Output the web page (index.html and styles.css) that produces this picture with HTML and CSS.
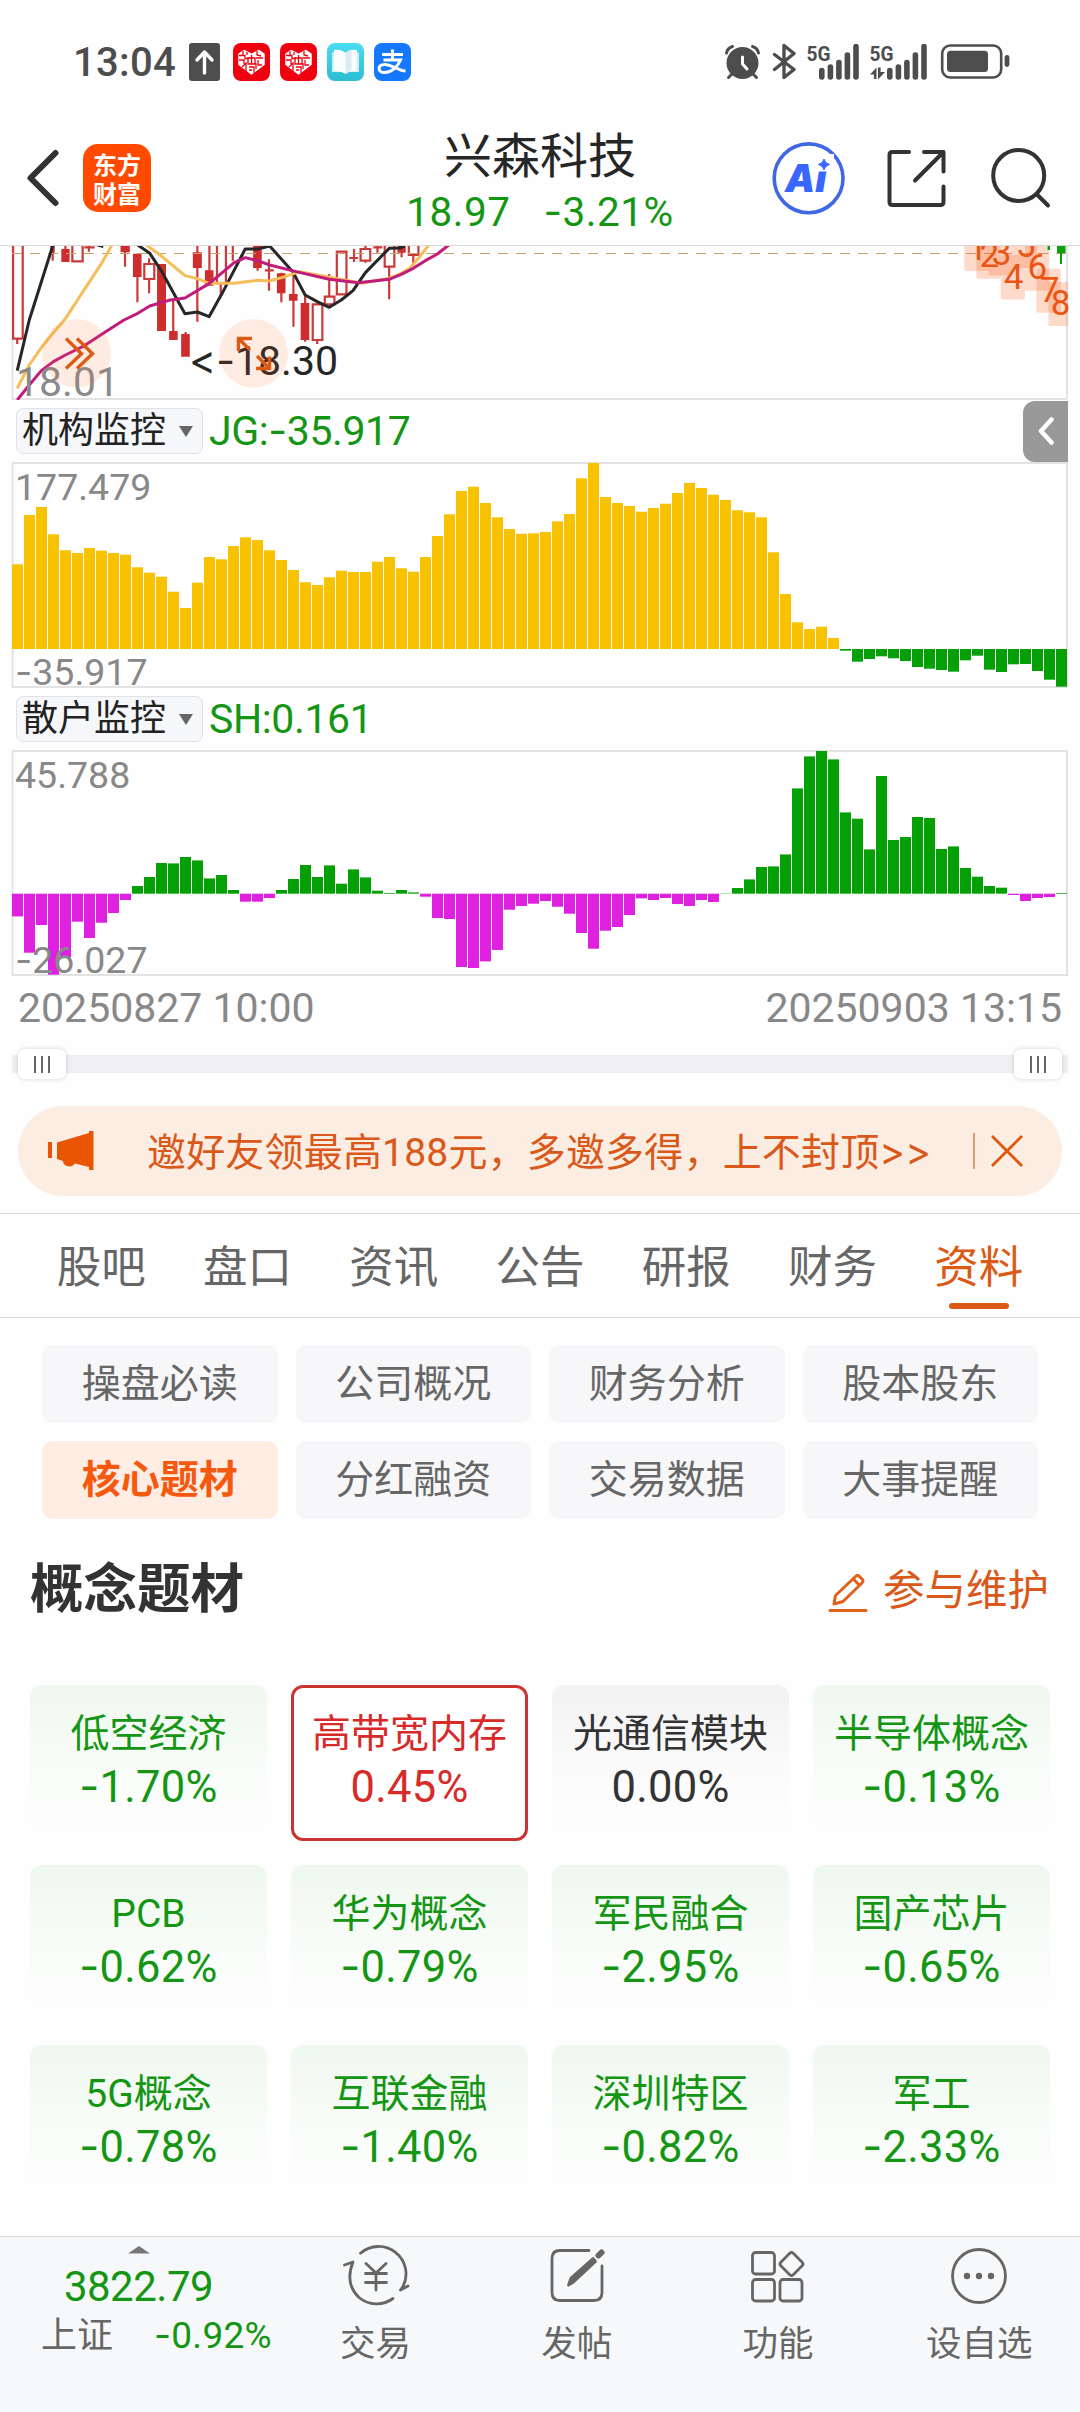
FILE: index.html
```html
<!DOCTYPE html>
<html lang="zh-CN">
<head>
<meta charset="utf-8">
<title>兴森科技</title>
<link rel="stylesheet" href="styles.css">
</head>
<body>
<div class="status">
  <span class="clock">13:04</span>
  <svg class="notices" width="222" height="38" viewBox="0 0 222 38">
    <rect width="31" height="38" rx="3" fill="#4d4d4d"/>
    <path d="M15.500 30V9M8 17l7.500-8 7.500 8" fill="none" stroke="#fff" stroke-width="3.400" stroke-linecap="round" stroke-linejoin="round"/>
    <g id="shop">
      <rect x="44" width="37" height="38" rx="8" fill="#f0000f"/>
      <path d="M62.500 31 50 21.500V11l5-3.500 7.500 4 7.500-4 5 3.500v10.500z" fill="#fff" stroke="#fff" stroke-width="1.500" stroke-linejoin="round"/>
      <path d="M50 12.500h6v3h4M54 8v4M50 17h5v4M58 9v3M53 24l4-4v9M59 14v7h7v-6h-7M60 24h5v6M62.500 12v9M68 8v4l4 1M67 15h7M69 17v5h4M67 20v6M60 27h3" fill="none" stroke="#f0000f" stroke-width="1.300"/>
    </g>
    <use href="#shop" x="47"/>
    <defs><linearGradient id="cyan" x2="0" y2="1"><stop stop-color="#4adcf0"/><stop offset="1" stop-color="#2cbdd2"/></linearGradient></defs>
    <rect x="138" width="37" height="38" rx="8" fill="url(#cyan)"/>
    <path d="M143 9.500h27V29h-27z" fill="#c9f1f7"/>
    <path d="M145 7q7-1 11.500 3Q161 6 168 7v21q-7-.5-11.500 3-4.500-3.500-11.500-3z" fill="#fafdff"/>
    <path d="M156.500 10q4-4 6-3.200v21q-4 .5-6 3.200z" fill="#dceaf5"/>
    <rect x="185" width="37" height="38" rx="8" fill="#1677ff"/>
    <path d="M193 11.500h21M203.500 6.500v11M194.500 17h17c-3 7-9 12.500-16 12.500-7 0-7.500-8 0-8 7 0 14 6 21 6.500" fill="none" stroke="#fff" stroke-width="3"/>
  </svg>
  <svg class="system" width="286" height="36" viewBox="724 44 286 36">
    <g fill="none" stroke="#4d4d4d" stroke-width="3" stroke-linecap="round">
      <circle cx="742.500" cy="63" r="14.500" fill="#4d4d4d"/>
      <path d="M726.500 53q1-5 6-6.500M758.500 53q-1-5-6-6.500M732 74l-3.500 3.500M753 74l3.500 3.500"/>
      <path d="M742.500 57v7l4.500 5" stroke="#fff"/>
      <path d="M774.500 54.500 794 69.500 784 77.500V45.500l10 8L774.500 69.500" stroke-linejoin="round" stroke-width="3.400"/>
      <path d="M821.800 70.500v6.500M830.400 67v10M838.900 62.500V77M847.400 55V77M856 46.500V77M889.800 70.500v6.500M898.400 67v10M906.900 62.500V77M915.400 55V77M924 46.500V77" stroke-width="5.600"/>
      <rect x="942.200" y="45.500" width="59" height="32" rx="8" stroke-width="2.600"/>
    </g>
    <path d="M870 74.500 876.500 67.500V79h-2.600v-4.500zM878 67.500h2.600v4.500h4.400L878 79.500z" fill="#4d4d4d"/>
    <rect x="947" y="50.700" width="41" height="21.200" rx="3.500" fill="#4d4d4d"/>
    <rect x="1004.600" y="55" width="4.800" height="12" rx="2.400" fill="#4d4d4d"/>
    <text class="net" x="806.500" y="61" textLength="24" lengthAdjust="spacingAndGlyphs">5G</text>
    <text class="net" x="869.500" y="61" textLength="24" lengthAdjust="spacingAndGlyphs">5G</text>
  </svg>
</div>

<header class="head">
  <svg class="back" width="36" height="60" viewBox="0 0 36 60"><path d="M30.500 5 5.500 30l25 25" fill="none" stroke="#333" stroke-width="6" stroke-linecap="round" stroke-linejoin="round"/></svg>
  <div class="logo">东方<br>财富</div>
  <div class="quote">
    <h1>兴森科技</h1>
    <p><span>18.97</span><span><i class="m">-</i>3.21%</span></p>
  </div>
  <svg class="tools" width="282" height="76" viewBox="771 140 282 76">
    <circle cx="808.600" cy="178.300" r="34.400" fill="none" stroke="#4068e4" stroke-width="3.600"/>
    <text class="ai" x="785" y="192">Ai</text>
    <path d="M814 154h20v17.500h-20z" fill="#fff"/>
    <path d="M824 159q1 4.500 5.500 5.500-4.500 1-5.500 5.500-1-4.500-5.500-5.500 4.500-1 5.500-5.500z" fill="#3866ff" stroke="#3866ff"/>
    <g fill="none" stroke="#333" stroke-width="4" stroke-linecap="round" stroke-linejoin="round">
      <path d="M909 152h-16.500q-3 0-3 3v47q0 3 3 3h48q3 0 3-3v-15.500M924 152h19.500v19.500M942 153.500l-27 27"/>
      <circle cx="1018.700" cy="175.500" r="25.500"/>
      <path d="M1037.500 195l10.500 10.500"/>
    </g>
  </svg>
</header>

<section class="kline">
  <svg width="1080" height="154" viewBox="0 0 1080 154">
    <path d="M12.500 0v153M12 153h1055M1067 0v153" fill="none" stroke="#e3e3e3" stroke-width="2"/>
    <g transform="translate(0 -6) scale(.3444 .3333)">
      <g class="hollow">
        <path d="M38 0V296H66V0M50 296v16M210 0H240V64H210zM225 64v3M258 10V35M245 22h30M419 72h29v45h-29zM433 55v17M433 117v43M630 0V130H656V0M641 130v35M676 0v62M781 58v94M769 91h26M908 193h28v107h-28zM921 300v12M943 170h28v23h-28zM956 102v68M978 35h28v128h-28zM1028 27v39M1014 54h26M1047 27h28v35h-28zM1061 0v27M1061 62v6M1096 0v38M1084 22h26M1117 0h28v80h-28zM1130 80v98M1187 0h28v45h-28zM1200 45v30"/>
        <path d="M153 0v62M190 0v30M363 0v80M399 41v146M503 180v93M539 276v10M573 0v245M608 0v95M748 0v92M817 98v89M852 105v155M886 165v140M1166 0v52"/>
      </g>
      <path class="solid" d="M146 0h13v38h-13zM178 27h24v39h-24zM350 0h27v37h-27zM386 41h25v70h-25zM456 72h26v201h-26zM491 273h25v27h-25zM526 282h25v68h-25zM560 37h26v47h-26zM595 91h25v46h-25zM735 0h25v84h-25zM804 100h25v60h-25zM839 162h25v20h-25zM873 189h25v111h-25zM1154 0h24v38h-24z"/>
    </g>
    <path d="M12 7.500h1056" stroke="#c8a070" stroke-dasharray="10 8"/>
    <g class="ma" transform="translate(0 -6) scale(.3444 .3333)">
      <path stroke="#262626" d="M50 392 85 240 153 18 160 0M275 12l25 8M400 15l35 25 35 55 67 126 36-5 34 14 38-70 67-133h36l35-9 67 77 36 70 35 20 35 17 35-22 34-28 36-54 69-73 30-1 15-6"/>
      <path stroke="#f6bd58" d="M50 445l35-70 35-52 35-45 37-45 33-53 35-55 35-55 30-55M425 15l40 30 72 62 36 9 34 14h73l65-9 38 2 37-11 50-17 86 17 94 18 80-15 35-15 25-15 25-30 30-40"/>
      <path stroke="#c01c7c" d="M50 480l35-45 35-43 35-27 35-20 50-25 60-40 60-40 40-20 35-22 55-17 47-7 70-43 73-63 32-15 36 9 35 13 77 20 96 23 84 10 90-10 35-15 35-18 35-23 35-20 33-27"/>
    </g>
    <g fill="#ff5c16" fill-opacity=".22">
      <rect x="964.300" y="-10" width="24.300" height="35" rx="2"/><rect x="976.400" y="-10" width="24.300" height="42.700" rx="2"/><rect x="988.500" y="-10" width="24.300" height="39.500" rx="2"/><rect x="1000.700" y="9" width="24.300" height="44.400" rx="2"/><rect x="1012.900" y="-10" width="24.300" height="32" rx="2"/><rect x="1024.900" y="-4" width="24.300" height="48.700" rx="2"/><rect x="1036.500" y="22.700" width="24.300" height="44" rx="2"/><path d="M1048.500 36H1068v44h-19.500z"/>
    </g>
    <g class="steps">
      <text x="977.500" y="14">1</text><text x="989.400" y="21">2</text><text x="1001.500" y="19">3</text><text x="1013.500" y="43">4</text><text x="1025.500" y="11">5</text><text x="1037.300" y="33">6</text><text x="1049.700" y="55.500">7</text><text x="1060.700" y="69">8</text>
    </g>
    <path d="M1047.600 0h2.400v4h-2.400zM1057 0h8.500v7h-8.500zM1060 7h2v11h-2z" fill="#09a009"/>
    <text class="low" x="16" y="150">18.01</text>
    <text class="mark" x="189" y="129" textLength="149"><tspan class="m">&lt;-</tspan>18.30</text>
    <g fill="#ff6a1e" fill-opacity=".12"><circle cx="76.500" cy="107.300" r="34.400"/><circle cx="253.500" cy="107.300" r="34.400"/></g>
    <path d="M66 92.500l15.500 15.200L66 122.500M77 92.500l15.500 15.200L77 122.500M238.500 105V92.500H252M239 93l11 11M269.500 110.500V122.500H256M269 122l-12-12" fill="none" stroke="#dc5a14" stroke-width="3.400"/>
  </svg>
</section>

<div class="indicator">
  <div class="select">机构监控<i></i></div><span>JG:<i class="m">-</i>35.917</span>
  <div class="drawer"><svg width="16" height="28" viewBox="0 0 16 28"><path d="M13.500 2.500 3 14l10.500 11.500" fill="none" stroke="#fff" stroke-width="4.500" stroke-linecap="round" stroke-linejoin="round"/></svg></div>
</div>
<section class="chart" id="jg"><span class="hi">177.479</span><span class="lo"><i class="m">-</i>35.917</span></section>
<div class="indicator"><div class="select">散户监控<i></i></div><span>SH:0.161</span></div>
<section class="chart" id="sh"><span class="hi">45.788</span><span class="lo"><i class="m">-</i>26.027</span></section>

<div class="dates"><span>20250827 10:00</span><span>20250903 13:15</span></div>
<div class="range"><div class="grip"><i></i><i></i><i></i></div><div class="grip"><i></i><i></i><i></i></div></div>

<div class="banner">
  <svg width="46" height="40" viewBox="0 0 46 40"><path d="M0 11h4v16H0zM9 11.500 41 2V0h4.500v39H41v-3l-14-3.500q-3 4-8 2.500-4-1.500-4-5l-6-2z" fill="#ea5504"/></svg>
  <span>邀好友领最高188元，多邀多得，上不封顶<b>&gt;&gt;</b></span>
  <i></i>
  <svg width="34" height="34" viewBox="0 0 34 34"><path d="M2 2l30 30M32 2 2 32" stroke="#e0560c" stroke-width="2.800"/></svg>
</div>

<nav class="tabs"><a>股吧</a><a>盘口</a><a>资讯</a><a>公告</a><a>研报</a><a>财务</a><a class="on">资料</a></nav>

<div class="chips">
  <a>操盘必读</a><a>公司概况</a><a>财务分析</a><a>股本股东</a>
  <a class="on">核心题材</a><a>分红融资</a><a>交易数据</a><a>大事提醒</a>
</div>

<div class="title">
  <h2>概念题材</h2>
  <svg width="40" height="40" viewBox="0 0 40 40"><path d="M2 37.500h36M6 31l1.500-8.500L27.500 3.500q2-2 4 0l2.500 2.500q2 2 0 4L15 28.500zM25.500 6l6 6.500" fill="none" stroke="#e0601c" stroke-width="3" stroke-linecap="round" stroke-linejoin="round"/></svg>
  <span>参与维护</span>
</div>

<div class="cards">
  <div class="card"><b>低空经济</b><span><i class="m">-</i>1.70%</span></div>
  <div class="card up"><b>高带宽内存</b><span>0.45%</span></div>
  <div class="card flat"><b>光通信模块</b><span>0.00%</span></div>
  <div class="card"><b>半导体概念</b><span><i class="m">-</i>0.13%</span></div>
  <div class="card"><b>PCB</b><span><i class="m">-</i>0.62%</span></div>
  <div class="card"><b>华为概念</b><span><i class="m">-</i>0.79%</span></div>
  <div class="card"><b>军民融合</b><span><i class="m">-</i>2.95%</span></div>
  <div class="card"><b>国产芯片</b><span><i class="m">-</i>0.65%</span></div>
  <div class="card"><b>5G概念</b><span><i class="m">-</i>0.78%</span></div>
  <div class="card"><b>互联金融</b><span><i class="m">-</i>1.40%</span></div>
  <div class="card"><b>深圳特区</b><span><i class="m">-</i>0.82%</span></div>
  <div class="card"><b>军工</b><span><i class="m">-</i>2.33%</span></div>
</div>

<footer class="dock">
  <div class="index">
    <svg width="22" height="8" viewBox="0 0 22 8"><path d="M0 7.500 11 0l11 7.500z" fill="#77777b"/></svg>
    <strong>3822.79</strong>
    <p><span>上证</span><em><i class="m">-</i>0.92%</em></p>
  </div>
  <a><svg viewBox="-34 -32 68 64"><path d="M-15.500-22.800A27.500 27.500 0 0 1 27 10.500M-31.500-11l8.500-3C-29 1-27 12-17 21.500A27.500 27.500 0 0 0 17 22.500M32 10l-7.500 4M27 10.500 24.500 14"/><path d="M-10-12.500 0-3 10-12.500M-10.500-2.500h21M-10.500 6.500h21M0-3v17"/></svg>交易</a>
  <a><svg viewBox="-34 -32 68 64"><path d="M12-25.500h-29q-8 0-8 8v34q0 8 8 8H17q8 0 8-8V-10"/><path d="M-8.500 9-6 2 16-17.500l2.500 3L-3.500 6z" fill="#666"/><path d="M21.500-20.500l3-3" stroke-width="6"/></svg>发帖</a>
  <a><svg viewBox="-34 -32 68 64"><rect x="-25.500" y="-23.500" width="22" height="21.500" rx="3"/><rect x="-25.500" y="3.500" width="22" height="21.500" rx="3"/><rect x="2" y="3.500" width="22" height="21.500" rx="3"/><rect x="-8.800" y="-8.800" width="17.600" height="17.600" rx="2.500" transform="translate(13.500 -12) rotate(45)"/></svg>功能</a>
  <a><svg viewBox="-34 -32 68 64"><circle r="26.500"/><g fill="#666" stroke="none"><circle cx="-12" r="3.200"/><circle r="3.200"/><circle cx="12" r="3.200"/></g></svg>设自选</a>
</footer>
<script src="chart.js"></script>
</body>
</html>
```
FILE: styles.css
```css
* { box-sizing: border-box; margin: 0; padding: 0; }
body {
  width: 1080px; height: 2412px; overflow: hidden; background: #fefefe;
  font-family: Roboto, "Noto Sans CJK SC", sans-serif; color: #333;
}
svg { display: block; flex: none; }
i, em { font-style: normal; }
.m { font-family: Inter, sans-serif; font-feature-settings: "calt" 0; line-height: 0; }

.status { height: 100px; padding: 43px 70px 0 73px; display: flex; align-items: flex-start; }
.clock { width: 116px; font-size: 40px; line-height: 40px; font-weight: 500; color: #4d4d4d; letter-spacing: .3px; }
.system { margin: 1px 0 0 auto; }
.net { font: 700 21px Roboto, sans-serif; fill: #4d4d4d; }

.head { height: 146px; border-bottom: 1px solid #d8d8d8; padding: 0 27px 0 25px; display: flex; align-items: flex-start; }
.back { margin-top: 48px; }
.logo {
  margin: 44px 0 0 22px; width: 68px; height: 68px; border-radius: 15px; background: #ff4a00; color: #fff;
  font: 700 24px/29px "Noto Sans CJK SC", sans-serif; text-align: center; padding-top: 5px;
}
.quote { width: 400px; margin: 26px 0 0 189px; text-align: center; }
.quote h1 { font-size: 48px; line-height: 62px; font-weight: 400; color: #262626; }
.quote p { display: flex; justify-content: center; gap: 33px; font-size: 40.500px; line-height: 48px; color: #149614; letter-spacing: .5px; }
.tools { margin: 40px 0 0 auto; }
.ai { font: italic 900 38px Inter, sans-serif; fill: #3866ff; letter-spacing: 0; }

.kline { height: 154px; }
.hollow { fill: none; stroke: #cb3a3a; }
.hollow path, .ma path { vector-effect: non-scaling-stroke; }
.hollow path { stroke-width: 2.2px; }
.solid { fill: #cf2d2d; }
.ma { fill: none; }
.ma path { stroke-width: 3px; stroke-linejoin: round; }
.steps { font-size: 35px; text-anchor: middle; fill: #ea5514; }
.low { font-size: 41px; fill: #8a8a8a; }
.mark { font-size: 41px; fill: #262626; }

.indicator { position: relative; height: 62px; padding-left: 16px; display: flex; align-items: center; }
.indicator > span { margin-left: 6px; font-size: 41px; color: #149614; letter-spacing: -.4px; }
.select {
  width: 187px; height: 46px; border: 1px solid #dfe1e6; border-radius: 7px; background: #f6f7fa; color: #222;
  padding: 0 9px 0 5px; display: flex; align-items: center; justify-content: space-between; font-size: 36px; line-height: 44px;
}
.select i { border: 7px solid transparent; border-top: 11px solid #666; border-bottom: 0; }
.drawer { margin-left: auto; margin-right: 12px; width: 45px; height: 61px; border-radius: 12px 0 0 12px; background: #999; display: flex; align-items: center; justify-content: center; }

.chart { position: relative; height: 226px; margin: 0 12px; }
.chart svg { margin-left: -12px; }
.chart span { position: absolute; left: 3px; font-size: 37.500px; line-height: 38px; color: #888; }
.hi { top: 6px; }
.lo { bottom: -3px; }

.dates { height: 73px; padding: 12px 18px 0; display: flex; justify-content: space-between; font-size: 41px; line-height: 40px; color: #888; }
.range { height: 30px; padding: 0 18px; display: flex; justify-content: space-between; background: linear-gradient(#f0f0f3, #f0f0f3) center / 1056px 18px no-repeat; }
.grip { width: 48px; height: 30px; border-radius: 7px; background: #fff; box-shadow: 0 0 5px rgba(0,0,0,.16); display: flex; align-items: center; justify-content: center; gap: 5px; }
.grip i { width: 2px; height: 17px; background: #666; }

.banner { height: 90px; margin: 27px 18px 17px; border-radius: 45px; background: #fcede3; padding: 0 38px 0 30px; display: flex; align-items: center; color: #d9581a; font-size: 39px; }
.banner span { margin: -5px 0 0 53px; white-space: nowrap; letter-spacing: .18px; }
.banner b { font-weight: 400; font-family: Inter, sans-serif; line-height: 1; }
.banner i { width: 2px; height: 36px; margin: 0 15px 0 auto; background: #df9c74; }

.tabs { height: 105px; padding: 0 28px; border: 1px solid #d9d9d9; border-width: 1px 0; display: flex; font-size: 44.500px; color: #666; }
.tabs a { flex: 1; position: relative; text-align: center; line-height: 108px; }
.tabs .on { color: #dc5a14; }
.tabs .on::after { content: ""; position: absolute; left: 50%; bottom: 8px; width: 60px; height: 6px; margin-left: -30px; border-radius: 3px; background: #dc5a14; }

.chips { padding: 27px 42px 0; display: grid; grid-template-columns: repeat(4, 1fr); gap: 18px; }
.chips a { height: 78px; border-radius: 11px; background: #f7f7fa; text-align: center; font-size: 39px; line-height: 78px; color: #666; }
.chips .on { background: #ffede4; color: #f5590f; font-weight: 700; }

.title { height: 166px; padding: 31px 31px 0 30px; display: flex; align-items: flex-start; }
.title h2 { margin-right: auto; font-size: 53.500px; line-height: 80px; color: #333; }
.title svg { margin: 23px 15px 0 0; }
.title span { font-size: 41.500px; line-height: 82px; color: #d9581a; }

.cards { height: 551px; padding: 0 30px; display: grid; grid-template-columns: repeat(4, 1fr); grid-auto-rows: 156px; gap: 24px; }
.card { border-radius: 12px; background: linear-gradient(#eef8ef, #f8fcf8 50%, #fefefe 92%); color: #149614; text-align: center; padding-top: 22px; }
.card b { display: block; font-weight: 400; font-size: 39px; line-height: 54px; }
.card span { display: block; font-size: 43.500px; line-height: 53px; letter-spacing: .3px; }
.up { background: #fff; border: 3px solid #cc3333; color: #d92a2a; padding-top: 19px; }
.flat { background: linear-gradient(#f2f2f3, #fafafa 50%, #fefefe 92%); color: #333; }

.dock { height: 176px; background: #f6f8fa; border-top: 1px solid #d5d8dc; display: flex; color: #666; }
.index { width: 275px; padding-left: 2px; display: flex; flex-direction: column; align-items: center; padding-top: 9px; }
.index strong { margin-top: 8px; font-weight: 400; font-size: 42px; line-height: 50px; color: #149614; letter-spacing: -.5px; }
.index p { width: 100%; padding: 1px 3px 0 39px; display: flex; justify-content: space-between; line-height: 46px; font-size: 36px; }
.index em { font-size: 37px; color: #149614; letter-spacing: .3px; }
.dock a { width: 201.200px; text-align: center; font-size: 35.500px; line-height: 46px; padding-top: 7px; }
.dock svg { margin: 0 auto; }
.dock a svg { width: 68px; height: 64px; margin-bottom: 13px; fill: none; stroke: #666; stroke-width: 2.800px; stroke-linecap: round; stroke-linejoin: round; }
```
FILE: chart.js
```javascript
// Bar heights in thirds of a pixel, measured from the zero line; negative hangs below.
const series = {
  jg: {
    zero: 187, up: "#f7c200", down: "#05a005",
    values: [254,402,426,344,296,288,303,295,288,283,245,229,217,172,123,199,276,269,309,335,327,296,267,237,200,192,215,235,231,231,262,276,242,232,276,339,404,474,487,438,395,360,346,347,
      351,383,405,512,558,456,438,429,412,423,436,468,498,483,463,447,416,410,395,290,165,80,60,67,33,-5,-38,-30,-22,-28,-36,-54,-59,-63,-68,-34,-20,-62,-69,-46,-45,-66,-92,-113]
  },
  sh: {
    zero: 143.7, up: "#05a005", down: "#e020e0",
    values: [-68,-177,-94,-243,-191,-84,-133,-87,-58,-19,23,50,92,91,110,100,46,56,11,-24,-24,-13,11,44,86,50,85,30,73,49,9,2,11,4,-9,-73,-76,-220,-223,-203,-169,-48,-37,-30,
      -22,-39,-60,-118,-165,-111,-100,-64,-14,-19,-13,-31,-37,-19,-25,1,17,43,80,82,118,316,412,428,403,244,225,133,353,161,170,230,227,134,142,77,51,23,18,-4,-22,-13,-10,2]
  }
};

for (const [id, s] of Object.entries(series)) {
  const bars = s.values.map((v, i) => {
    const h = Math.abs(v) / 3;
    const y = v > 0 ? s.zero - h : s.zero;
    return `<rect x="${12 + i * 12}" y="${y.toFixed(1)}" width="11" height="${h.toFixed(1)}" fill="${v > 0 ? s.up : s.down}"/>`;
  }).join("");
  document.getElementById(id).insertAdjacentHTML("afterbegin",
    `<svg width="1080" height="226" viewBox="0 0 1080 226"><path d="M12.500 1V225M12 1H1067V225H12" fill="none" stroke="#e3e3e3" stroke-width="2"/>${bars}</svg>`);
}
```
